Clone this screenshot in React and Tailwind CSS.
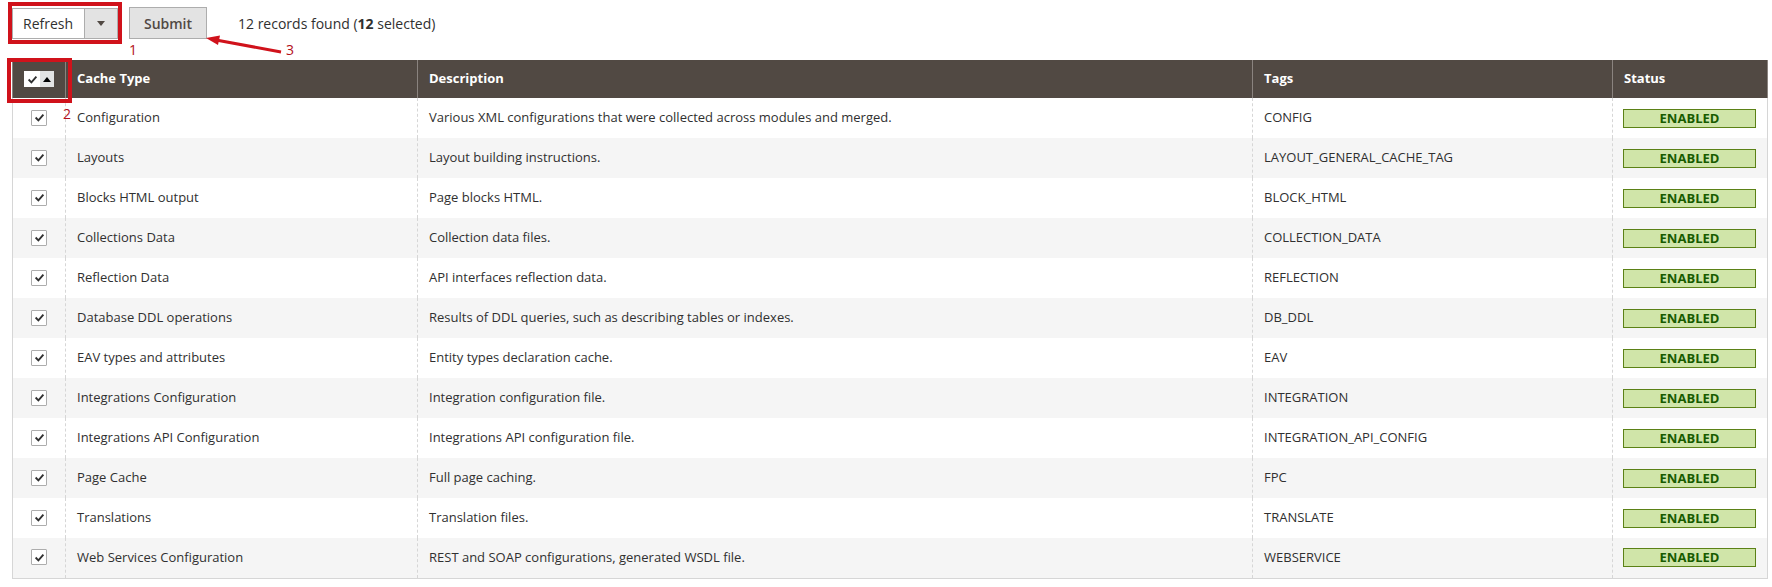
import React from "react";

const rows = [
  ["Configuration", "Various XML configurations that were collected across modules and merged.", "CONFIG"],
  ["Layouts", "Layout building instructions.", "LAYOUT_GENERAL_CACHE_TAG"],
  ["Blocks HTML output", "Page blocks HTML.", "BLOCK_HTML"],
  ["Collections Data", "Collection data files.", "COLLECTION_DATA"],
  ["Reflection Data", "API interfaces reflection data.", "REFLECTION"],
  ["Database DDL operations", "Results of DDL queries, such as describing tables or indexes.", "DB_DDL"],
  ["EAV types and attributes", "Entity types declaration cache.", "EAV"],
  ["Integrations Configuration", "Integration configuration file.", "INTEGRATION"],
  ["Integrations API Configuration", "Integrations API configuration file.", "INTEGRATION_API_CONFIG"],
  ["Page Cache", "Full page caching.", "FPC"],
  ["Translations", "Translation files.", "TRANSLATE"],
  ["Web Services Configuration", "REST and SOAP configurations, generated WSDL file.", "WEBSERVICE"],
];

function Check({ className = "" }) {
  return (
    <svg viewBox="0 0 14 14" className={className}>
      <path d="M2.8 7 L5.8 10 L11.2 3.8" fill="none" stroke="#303030" strokeWidth="2" />
    </svg>
  );
}

function Checkbox() {
  return (
    <span className="inline-flex h-[16px] w-[16px] items-center justify-center rounded-[1px] border border-[#adadad] bg-white">
      <Check className="h-[13px] w-[13px]" />
    </span>
  );
}

export default function App() {
  return (
    <div className="relative h-[587px] w-[1772px] overflow-hidden bg-white font-['Open_Sans',sans-serif] text-[14px] text-[#303030]">
      {/* TOOLBAR */}
      <div className="box-content flex h-[32px] items-center pl-[12px] pt-[7px]">
        <div className="flex h-[31px] w-[106px] border border-[#adadad] bg-white">
          <span className="flex flex-1 items-center pl-[10px]">Refresh</span>
          <span className="flex w-[33px] items-center justify-center border-l border-[#adadad] bg-[#e3e3e3]">
            <svg viewBox="0 0 8 5" className="h-[5px] w-[8px]">
              <path d="M0 0 H8 L4 5 Z" fill="#514943" />
            </svg>
          </span>
        </div>
        <button className="ml-[11px] h-[32px] w-[78px] border border-[#adadad] bg-[#e3e3e3] font-semibold text-[#514943]">
          Submit
        </button>
        <span className="ml-[31px]">
          12 records found (<b className="font-bold">12</b> selected)
        </span>
      </div>

      {/* GRID */}
      <table className="ml-[12px] mt-[21px] w-[1755px] table-fixed border-collapse text-[13px]">
        <colgroup>
          <col className="w-[53px]" />
          <col className="w-[352px]" />
          <col className="w-[835px]" />
          <col className="w-[360px]" />
          <col className="w-[155px]" />
        </colgroup>
        <thead>
          <tr className="h-[38px] bg-[#514943] text-left font-bold text-white">
            <th className="border-x border-[#8a837f] p-0">
              <div className="flex justify-center">
                <span className="flex h-[16px]">
                  <span className="flex w-[16px] items-center justify-center bg-white">
                    <Check className="h-[13px] w-[13px]" />
                  </span>
                  <span className="flex w-[14px] items-center justify-center bg-[#e3e3e3]">
                    <svg viewBox="0 0 8 5" className="h-[5px] w-[8px]">
                      <path d="M0 5 H8 L4 0 Z" fill="#000" />
                    </svg>
                  </span>
                </span>
              </div>
            </th>
            <th className="border-x border-[#8a837f] px-[11px]">Cache Type</th>
            <th className="border-x border-[#8a837f] px-[11px]">Description</th>
            <th className="border-x border-[#8a837f] px-[11px]">Tags</th>
            <th className="border-x border-[#8a837f] px-[11px]">Status</th>
          </tr>
        </thead>
        <tbody className="border-x border-b border-[#d6d6d6]">
          {rows.map(([type, desc, tag], i) => (
            <tr key={type} className={i % 2 ? "h-[40px] bg-[#f5f5f5]" : "h-[40px] bg-white"}>
              <td className="border-r border-dashed border-[#d6d6d6] p-0 text-center align-middle">
                <span className="inline-flex pt-[3px]">
                  <Checkbox />
                </span>
              </td>
              <td className="border-r border-dashed border-[#d6d6d6] px-[11px]">{type}</td>
              <td className="border-r border-dashed border-[#d6d6d6] px-[11px]">{desc}</td>
              <td className="border-r border-dashed border-[#d6d6d6] px-[11px]">{tag}</td>
              <td className="px-[10px]">
                <div className="flex h-[19px] w-[133px] items-center justify-center border border-[#5b8116] bg-[#d0e5a9] text-[13px] font-bold leading-none text-[#185b00]">
                  ENABLED
                </div>
              </td>
            </tr>
          ))}
        </tbody>
      </table>

      {/* ANNOTATIONS */}
      <div className="pointer-events-none absolute left-[8px] top-[2px] h-[42px] w-[114px] border-4 border-[#d0121b]" />
      <div className="pointer-events-none absolute left-[7px] top-[58px] h-[45px] w-[65px] border-4 border-[#d0121b]" />
      <span className="absolute left-[129px] top-[42px] text-[14px] leading-[16px] text-[#b3101a]">1</span>
      <span className="absolute left-[63px] top-[106px] text-[14px] leading-[16px] text-[#b3101a]">2</span>
      <span className="absolute left-[286px] top-[42px] text-[14px] leading-[16px] text-[#b3101a]">3</span>
      <svg className="pointer-events-none absolute left-0 top-0" width="320" height="70">
        <line x1="281" y1="52" x2="216" y2="40" stroke="#d0121b" strokeWidth="3" />
        <polygon points="206,38 220,35.5 218,45" fill="#d0121b" />
      </svg>
    </div>
  );
}
